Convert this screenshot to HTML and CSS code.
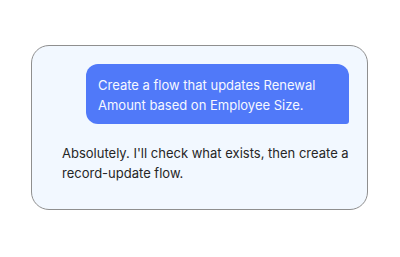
FILE: index.html
```html
<!DOCTYPE html>
<html lang="en">
<head>
  <meta charset="UTF-8">
  <title>Chat</title>
  <meta name="viewport" content="width=device-width, initial-scale=1.0" />
  <link rel="stylesheet" href="styles.css">
</head>
<body>

  <div class="chat">
    <div class="msg user">
      <div class="bubble">Create a flow that updates Renewal Amount based on Employee Size.</div>
    </div>
    <div class="msg assistant">
      Absolutely. I'll check what exists, then create a record-update flow.
    </div>
  </div>

</body>
</html>
```

FILE: styles.css
```css
body {
  margin: 0;
  background: #fff;
  font-family: Inter, "Noto Sans", sans-serif;
}
.chat {
  width: 337px;
  box-sizing: border-box;
  margin: 45px 0 0 31px;
  padding: 18px;
  background: #f2f8ff;
  border: 1px solid #8f8f8f;
  border-radius: 18px;
  display: flex;
  flex-direction: column;
  gap: 11px;
}
.msg {
  font-size: 13px;
  line-height: 20px;
}
.user {
  display: flex;
  justify-content: flex-end;
}
.bubble {
  width: 263px;
  box-sizing: border-box;
  padding: 11px 12px 9px;
  background: #5079f9;
  color: #f6f8ff;
  border-radius: 12px 12px 3px 12px;
}
.assistant {
  padding: 8px 0 8px 12px;
  color: #262626;
}
```
